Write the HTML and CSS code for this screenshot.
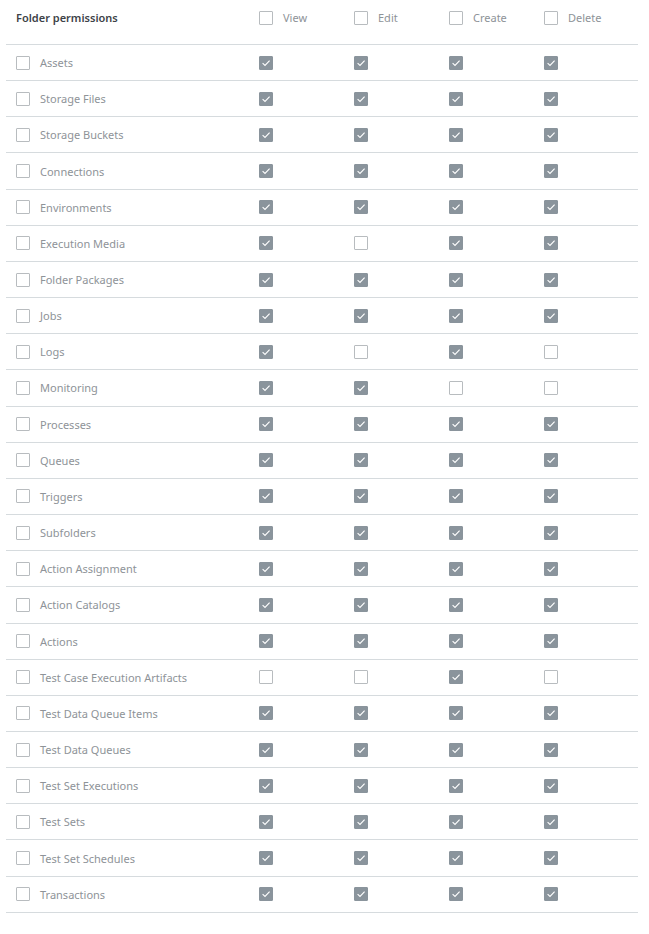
FILE: index.html
```html
<!DOCTYPE html>
<html>
<head>
<meta charset="utf-8">
<link rel="stylesheet" href="styles.css">
</head>
<body>
<div class="perm">
  <div class="row head">
    <div class="title">Folder permissions</div>
    <label class="col"><span class="cb"></span><span class="lbl">View</span></label>
    <label class="col"><span class="cb"></span><span class="lbl">Edit</span></label>
    <label class="col"><span class="cb"></span><span class="lbl">Create</span></label>
    <label class="col"><span class="cb"></span><span class="lbl">Delete</span></label>
  </div>
  <div id="rows"></div>
</div>
<script src="app.js"></script>
</body>
</html>
```
FILE: app.js
```js
const data = [
  ["Assets","1111"],["Storage Files","1111"],["Storage Buckets","1111"],["Connections","1111"],
  ["Environments","1111"],["Execution Media","1011"],["Folder Packages","1111"],["Jobs","1111"],
  ["Logs","1010"],["Monitoring","1100"],["Processes","1111"],["Queues","1111"],
  ["Triggers","1111"],["Subfolders","1111"],["Action Assignment","1111"],["Action Catalogs","1111"],
  ["Actions","1111"],["Test Case Execution Artifacts","0010"],["Test Data Queue Items","1111"],
  ["Test Data Queues","1111"],["Test Set Executions","1111"],["Test Sets","1111"],
  ["Test Set Schedules","1111"],["Transactions","1111"]
];
const check = '<svg viewBox="0 0 14 14" width="14" height="14"><path d="M3.6 7.2 L6 9.5 L10.6 4.6" fill="none" stroke="#fff" stroke-width="1.1"/></svg>';
const root = document.getElementById('rows');
root.innerHTML = data.map(([name, bits]) => {
  const cells = bits.split('').map(b => b === '1'
    ? `<div class="col"><span class="cb on">${check}</span></div>`
    : `<div class="col"><span class="cb"></span></div>`).join('');
  return `<div class="row item"><div class="name"><span class="cb"></span><span class="lbl">${name}</span></div>${cells}</div>`;
}).join('');
```
FILE: styles.css
```css
html, body { margin: 0; padding: 0; background: #fff; }
body { font-family: "Noto Sans", "Open Sans", sans-serif; font-size: 11px; color: #8c9196; }
.perm { padding: 0 11px 0 6px; }
.row {
  display: grid;
  grid-template-columns: 253px 95px 95px 95px 1fr;
  align-items: center;
  border-bottom: 1px solid #d6dbde;
  box-sizing: border-box;
}
.head { height: 45px; padding-bottom: 9px; }
.item { height: 36.17px; }
.title { padding-left: 10px; font-weight: 600; color: #3d4247; font-size: 11px; }
.name { display: flex; align-items: center; padding-left: 10px; }
.col { display: flex; align-items: center; }
.cb {
  width: 14px; height: 14px; box-sizing: border-box;
  border: 1px solid #b8bcbf; border-radius: 1px; background: #fff;
  display: inline-block; flex: none;
}
.cb.on { background: #8a949c; border-color: #8a949c; position: relative; }
.cb.on svg { position: absolute; left: -1px; top: -1px; }
.lbl { margin-left: 10px; color: #8e9398; }
```
